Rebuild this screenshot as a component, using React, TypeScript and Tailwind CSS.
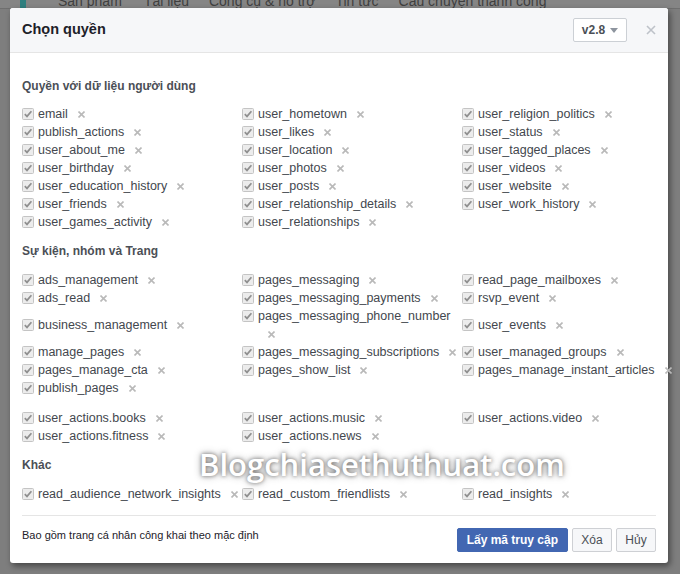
import { Fragment } from "react";

type Cell = string | null;

const userRows: Cell[][] = [
  ["email", "user_hometown", "user_religion_politics"],
  ["publish_actions", "user_likes", "user_status"],
  ["user_about_me", "user_location", "user_tagged_places"],
  ["user_birthday", "user_photos", "user_videos"],
  ["user_education_history", "user_posts", "user_website"],
  ["user_friends", "user_relationship_details", "user_work_history"],
  ["user_games_activity", "user_relationships", null],
];

const pageRows: Cell[][] = [
  ["ads_management", "pages_messaging", "read_page_mailboxes"],
  ["ads_read", "pages_messaging_payments", "rsvp_event"],
  ["business_management", "pages_messaging_phone_number", "user_events"],
  ["manage_pages", "pages_messaging_subscriptions", "user_managed_groups"],
  ["pages_manage_cta", "pages_show_list", "pages_manage_instant_articles"],
  ["publish_pages", null, null],
];

const actionRows: Cell[][] = [
  ["user_actions.books", "user_actions.music", "user_actions.video"],
  ["user_actions.fitness", "user_actions.news", null],
];

const otherRows: Cell[][] = [
  ["read_audience_network_insights", "read_custom_friendlists", "read_insights"],
];

const navItems = [
  { label: "Sản phẩm", x: "ml-[32px]" },
  { label: "Tài liệu", x: "ml-[22px]" },
  { label: "Công cụ & hỗ trợ", x: "ml-[20px]" },
  { label: "Tin tức", x: "ml-[20px]" },
  { label: "Câu chuyện thành công", x: "ml-[20px]" },
];

const CheckMark = () => (
  <svg width="12" height="12" viewBox="0 0 12 12" className="mt-[3px] shrink-0">
    <rect x="0.5" y="0.5" width="11" height="11" rx="1" fill="#ececec" stroke="#c4c4c4" />
    <path d="M2.8 6.2 L5 8.4 L9.4 3.2" fill="none" stroke="#8f8f8f" strokeWidth="1.7" />
  </svg>
);

const RemoveX = () => (
  <svg width="7" height="7" viewBox="0 0 7 7" className="ml-[10px] inline-block align-middle">
    <path d="M0.5 0.5 L6.5 6.5 M6.5 0.5 L0.5 6.5" stroke="#b9b9b9" strokeWidth="1.6" />
  </svg>
);

const Perm = ({ name }: { name: Cell }) => {
  if (!name) return <div />;
  return (
    <div className="flex gap-[4px]">
      <CheckMark />
      <div className="min-w-0 flex-1 text-[12.5px] leading-[18px] text-[#43474e]">
        {name}
        <RemoveX />
      </div>
    </div>
  );
};

const PermGrid = ({ rows }: { rows: Cell[][] }) => (
  <div className="grid grid-cols-[220px_220px_220px] items-center">
    {rows.map((row, i) => (
      <Fragment key={i}>
        {row.map((c, j) => (
          <Perm key={j} name={c} />
        ))}
      </Fragment>
    ))}
  </div>
);

const Heading = ({ children, className = "mb-3" }: { children: string; className?: string }) => (
  <div className={`text-[12px] font-bold leading-4 text-[#4b4f56] ${className}`}>{children}</div>
);

export default function App() {
  return (
    <div
      className="relative h-[574px] w-[680px] overflow-hidden bg-[#7e7e7e]"
      style={{ fontFamily: '"Liberation Sans", Arial, sans-serif' }}
    >
      {/* page behind the dialog */}
      <div className="flex h-[9px] items-end overflow-hidden border-b border-[#6f6f6f] bg-[#858585]">
        <div className="ml-[20px] h-[9px] w-[6px] shrink-0 bg-[#2f7f7f]" />
        {navItems.map((n) => (
          <span key={n.label} className={`${n.x} whitespace-nowrap text-[14px] leading-[14px] text-[#3f3f3f]`}>
            {n.label}
          </span>
        ))}
      </div>

      {/* dialog */}
      <div className="absolute left-[10px] top-[8px] w-[658px] rounded-[3px] bg-white shadow-[2px_3px_6px_rgba(0,0,0,0.45)]">
        <div className="flex h-[45px] items-start rounded-t-[3px] border-b border-[#e5e5e5] bg-[#f6f7f9] px-3 pt-[10px]">
          <div className="flex-1 pt-[2px] text-[14.5px] font-bold leading-[18px] text-[#1d2129]">Chọn quyền</div>
          <div className="flex h-[24px] w-[54px] items-center justify-center gap-[5px] rounded-[2px] border border-[#ccd0d5] bg-white text-[12px] font-bold text-[#4b4f56]">
            v2.8
            <svg width="8" height="5" viewBox="0 0 8 5">
              <path d="M0 0 H8 L4 5 Z" fill="#8d949e" />
            </svg>
          </div>
          <svg width="10" height="10" viewBox="0 0 10 10" className="ml-[19px] mt-[7px]">
            <path d="M1 1 L9 9 M9 1 L1 9" stroke="#bec2c9" strokeWidth="1.6" />
          </svg>
        </div>

        <div className="px-3 pt-[25px]">
          <Heading className="mb-[11px]">Quyền với dữ liệu người dùng</Heading>
          <PermGrid rows={userRows} />

          <Heading className="mb-3 mt-3">Sự kiện, nhóm và Trang</Heading>
          <PermGrid rows={pageRows} />
          <div className="mt-3">
            <PermGrid rows={actionRows} />
          </div>

          <Heading className="mb-3 mt-3">Khác</Heading>
          <PermGrid rows={otherRows} />

          <div className="mt-3 border-t border-[#e5e5e5]" />

          <div className="flex items-start pb-[11px] pt-3">
            <div className="flex-1 text-[11px] leading-[14px] text-[#1d2129]">
              Bao gồm trang cá nhân công khai theo mặc định
            </div>
            <button className="h-[24px] rounded-[2px] border border-[#4267b2] bg-[#4267b2] px-[9px] text-[12px] font-bold text-white">
              Lấy mã truy cập
            </button>
            <button className="ml-[4px] h-[24px] w-[40px] rounded-[2px] border border-[#ced0d4] bg-[#f6f7f9] text-[12px] text-[#4b4f56]">
              Xóa
            </button>
            <button className="ml-[4px] h-[24px] w-[40px] rounded-[2px] border border-[#ced0d4] bg-[#f6f7f9] text-[12px] text-[#4b4f56]">
              Hủy
            </button>
          </div>
        </div>
      </div>

      {/* watermark */}
      <div
        className="pointer-events-none absolute left-[199px] top-[444px] whitespace-nowrap text-[31px] font-semibold leading-[40px] text-white [text-shadow:0_0_4px_rgba(0,0,0,0.55),0_0_8px_rgba(0,0,0,0.3)]"
        style={{ fontFamily: '"Open Sans", sans-serif' }}
      >
        Blogchiasethuthuat.com
      </div>
    </div>
  );
}
